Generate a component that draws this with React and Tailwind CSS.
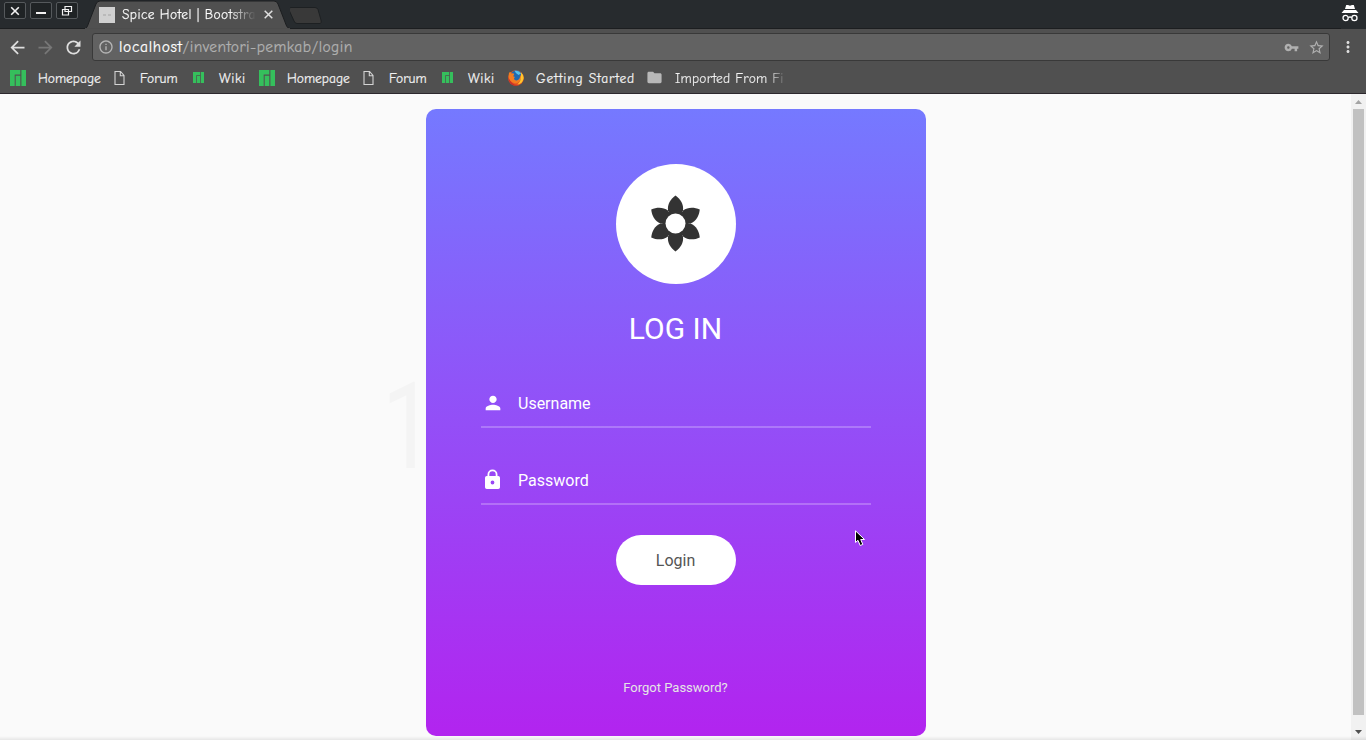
import React from "react";
import {
  MdArrowBack,
  MdArrowForward,
  MdRefresh,
  MdInfoOutline,
  MdVpnKey,
  MdStarBorder,
  MdMoreVert,
  MdPerson,
  MdFolder,
} from "react-icons/md";

function WindowButton({ children }) {
  return (
    <div className="flex h-[17px] w-[22px] items-center justify-center rounded-[2px] border border-[#55595c] bg-[#1f2325]">
      <svg width="12" height="12" viewBox="0 0 12 12" fill="none" stroke="#f2f2f2">
        {children}
      </svg>
    </div>
  );
}

function TitleBar() {
  return (
    <div className="flex h-[29px] shrink-0 bg-[#272b2e]">
      <div className="flex w-[85px] gap-1 border-b border-[#1c1e20] pt-[2px] pl-1">
        <WindowButton>
          <path d="M2.200 2.200l7.600 7.600M9.800 2.200l-7.600 7.600" strokeWidth="1.600" />
        </WindowButton>
        <WindowButton>
          <path d="M1 8h10" strokeWidth="2" />
        </WindowButton>
        <WindowButton>
          <path d="M4 1.500h6.500v5h-6.500zM1.500 4.500h6v5.500h-6z" strokeWidth="1.200" />
        </WindowButton>
      </div>
      <div className="relative flex w-[205px] items-center pl-[14px]">
        <svg className="absolute inset-0" width="205" height="29" viewBox="0 0 205 29">
          <path d="M0 29C2 28 3 25 4 22L11 4Q12 1 15 1H189Q192 1 193 4L200 22C201 25 202 28 205 29Z" fill="#505050" stroke="#1c1e20" />
          <path d="M0 28.600H205" stroke="#505050" />
        </svg>
        <svg className="relative shrink-0" width="16" height="16" viewBox="0 0 16 16">
          <rect width="16" height="16" fill="#d0d0d0" />
          <path d="M4 8h3M9 8h3" stroke="#a4a4a4" />
        </svg>
        <span className="relative ml-[7px] w-[134px] overflow-hidden bg-linear-to-r from-white from-80% to-transparent bg-clip-text text-[13.5px] leading-5 tracking-[0.4px] whitespace-nowrap text-transparent [-webkit-text-stroke:0.25px_transparent]">
          Spice Hotel | Bootstra
        </span>
        <svg className="relative ml-[8px] shrink-0" width="9" height="9" viewBox="0 0 9 9" stroke="#e0e0e0" strokeWidth="1.500">
          <path d="M.7.7l7.600 7.600M8.300.7L.7 8.300" />
        </svg>
      </div>
      <div className="flex-1 border-b border-[#1c1e20]">
        <svg width="34" height="28" viewBox="0 0 34 28">
          <path d="M1 7.500H25Q27 7.500 28 9.500L31 20Q32 23.500 30 23.500H7Q5 23.500 4 21L-1 10Q-2 7.500 1 7.500Z" fill="#393939" stroke="#1d2022" />
        </svg>
      </div>
      <svg className="mt-[5px] mr-[7px]" width="18" height="17" viewBox="0 0 18 17">
        <path d="M5.200 0H7L9 .7 11 0H12.800L14 4H4ZM3 5H15L17.500 8H.5Z" fill="#fff" />
        <g fill="none" stroke="#fff" strokeWidth="1.300">
          <circle cx="4.600" cy="13" r="2.600" />
          <circle cx="13.400" cy="13" r="2.600" />
          <path d="M7.300 12.500q1.700-1 3.400 0" />
        </g>
      </svg>
    </div>
  );
}

function AddressBar() {
  return (
    <div className="flex h-8 shrink-0 items-center bg-[#505050] pt-1">
      <MdArrowBack className="ml-[7px]" size={21} color="#dedede" />
      <MdArrowForward className="ml-[7px]" size={21} color="#777" />
      <MdRefresh className="ml-[7px]" size={21} color="#dedede" />
      <div className="ml-[8px] flex h-7 w-[1238px] items-center rounded-[3px] border border-[#393939] bg-[#626262] pl-[5px]">
        <MdInfoOutline size={16} color="#b5b5b5" />
        <span className="ml-[5px] flex-1 text-[15.5px] leading-5 tracking-[0.42px] text-[#b0b0b0] [-webkit-text-stroke:0.2px]">
          <span className="tracking-[0.65px] text-white">localhost</span>/inventori-pemkab/login
        </span>
        <MdVpnKey size={15} color="#b0b0b0" />
        <MdStarBorder className="mr-[4px] ml-[9px]" size={17} color="#b0b0b0" />
      </div>
      <MdMoreVert className="ml-[9px]" size={18} color="#dedede" />
    </div>
  );
}

function ManjaroIcon({ size }) {
  return (
    <svg width={size} height={size} viewBox="0 0 16 16" fill="#35bf5c">
      <path d="M0 0H10.300V4.600H4.700V16H0ZM5.700 5.700H10.300V16H5.700ZM11.400 0H16V16H11.400Z" />
    </svg>
  );
}

function PageIcon() {
  return (
    <svg width="12" height="14" viewBox="0 0 12 14" fill="none" stroke="#d4d4d4" strokeWidth="1.100">
      <path d="M1 .5H6.500L10 4.500V13.500H1ZM6.300.5V4.800H10" />
    </svg>
  );
}

function FirefoxIcon() {
  return (
    <svg width="16" height="16" viewBox="0 0 16 16">
      <circle cx="8" cy="8" r="7.800" fill="#e8571f" />
      <circle cx="8.300" cy="6" r="5.800" fill="#2069b0" />
      <path d="M6.500.8Q11 0 13 3.500L10.500 5Q7.500 3.500 6.500.8" fill="#56c1ea" />
      <path d="M.9 3.200L2 1.800 3.600 3.400Q5.200 3 6.300 4L5.200 6.300 7 7Q5.200 8 6.500 9.800 9 11.500 11.200 9 12.600 7 11.800 4.500 13.500 6 13 9 11 14 6 13 1 11 .5 7Z" fill="#f47c20" />
      <path d="M12.800 2.300Q15.500 4.500 15.700 8 15 13.500 9.500 14.500 14 11 12.800 2.300" fill="#ffc62c" />
      <path d="M.4 6.500Q1.500 12 6.500 14.500 11 15.600 12.500 14 10 16 7 15.700 0 14.500.4 6.500" fill="#c9302a" />
    </svg>
  );
}

function Bookmark({ icon, label, width, gap }) {
  return (
    <div className={"flex shrink-0 items-center " + width}>
      <div className={"flex shrink-0 " + gap}>{icon}</div>
      <span className="pt-[3px] whitespace-nowrap">{label}</span>
    </div>
  );
}

function BookmarksBar() {
  return (
    <div className="flex h-[33px] shrink-0 items-center border-b border-[#2c282d] bg-[#505050] pt-px pl-[10px] text-[13.5px] text-[#f2f2f2] [-webkit-text-stroke:0.2px]">
      <Bookmark icon={<ManjaroIcon size={16} />} label="Homepage" width="w-[104px]" gap="w-[28px]" />
      <Bookmark icon={<PageIcon />} label="Forum" width="w-[79px]" gap="w-[26px]" />
      <Bookmark icon={<ManjaroIcon size={11} />} label={<span className="tracking-[0.6px]">Wiki</span>} width="w-[66px]" gap="w-[26px]" />
      <Bookmark icon={<ManjaroIcon size={16} />} label="Homepage" width="w-[104px]" gap="w-[28px]" />
      <Bookmark icon={<PageIcon />} label="Forum" width="w-[79px]" gap="w-[26px]" />
      <Bookmark icon={<ManjaroIcon size={11} />} label={<span className="tracking-[0.6px]">Wiki</span>} width="w-[66px]" gap="w-[26px]" />
      <Bookmark icon={<FirefoxIcon />} label={<span className="tracking-[0.8px]">Getting Started</span>} width="w-[138px]" gap="w-[28px]" />
      <Bookmark
        icon={<MdFolder size={17} color="#b8b8b8" />}
        label={
          <span className="block w-[112px] overflow-hidden bg-linear-to-r from-[#f2f2f2] from-82% to-transparent bg-clip-text tracking-[0.25px] text-transparent [-webkit-text-stroke:0.2px_transparent]">
            Imported From Fi
          </span>
        }
        width="w-[144px]"
        gap="w-[29px]"
      />
    </div>
  );
}

const petals = [0, 60, 120, 180, 240, 300];

function LockIcon() {
  return (
    <svg width="22" height="22" viewBox="0 0 22 22">
      <path
        fill="#fff"
        fillRule="evenodd"
        d="M5.500 7V5.500a5 5 0 0 1 10 0V7H16.200a1.800 1.800 0 0 1 1.800 1.800V18.200a1.800 1.800 0 0 1-1.800 1.800H4.800A1.800 1.800 0 0 1 3 18.200V8.800A1.800 1.800 0 0 1 4.800 7ZM7.300 7H13.700V5.500a3.200 3.200 0 0 0-6.400 0ZM10.500 11.600a1.900 1.900 0 1 0 0 3.800a1.900 1.900 0 1 0 0-3.800Z"
      />
    </svg>
  );
}

function Field({ icon, label }) {
  return (
    <div className="mb-[30px] flex h-[47px] items-center border-b-2 border-white/24 pl-px">
      <span className="w-[36.500px] pb-[2px]">{icon}</span>
      <span className="text-[16px] leading-5 text-white">{label}</span>
    </div>
  );
}

function LoginCard() {
  return (
    <div className="relative flex h-[627px] w-[500px] flex-col rounded-[10px] bg-linear-to-b/srgb from-[#7579ff] to-[#b224ef] px-[55px] pt-[55px] font-['Roboto',sans-serif]">
      <div className="flex size-[120px] shrink-0 items-center justify-center self-center rounded-full bg-white">
        <svg width="60" height="60" viewBox="-29.500 -29.500 60 60">
          {petals.map((a) => (
            <path
              key={a}
              transform={"rotate(" + a + ")"}
              d="M0-28C5-24.500 8.300-19 7.500-13L0 0L-7.500-13C-8.300-19-5-24.500 0-28Z"
              fill="#333"
            />
          ))}
          <circle r="13" fill="#333" />
          <circle r="10" fill="#fff" />
        </svg>
      </div>
      <h1 className="mt-[27px] mb-[34px] text-center text-[30px] leading-9 text-white">LOG IN</h1>
      <Field icon={<MdPerson size={22} color="#fff" />} label="Username" />
      <Field icon={<LockIcon />} label="Password" />
      <button className="h-[50px] w-[120px] shrink-0 self-center rounded-[25px] bg-white pt-[2px] text-[16px] text-[#555]">
        Login
      </button>
      <a className="mt-[93px] text-center text-[13px] leading-5 text-[#e5e5e5]">Forgot Password?</a>
    </div>
  );
}

function Scrollbar() {
  return (
    <div className="flex w-[15px] shrink-0 flex-col items-center bg-[#f1f1f1]">
      <svg width="15" height="15" viewBox="0 0 15 15">
        <path d="M4 10L7.500 6L11 10Z" fill="#a3a3a3" />
      </svg>
      <div className="h-[606px] w-[11px] bg-[#c1c1c1]" />
      <svg className="mt-[9px]" width="15" height="15" viewBox="0 0 15 15">
        <path d="M4 6L7.500 10L11 6Z" fill="#505050" />
      </svg>
    </div>
  );
}

export default function App() {
  return (
    <div className="flex h-[740px] w-[1366px] flex-col overflow-hidden bg-[#fafafa] font-['Comic_Neue','Noto_Sans',sans-serif]">
      <TitleBar />
      <AddressBar />
      <BookmarksBar />
      <main className="relative flex h-[646px]">
        <span className="absolute top-[273px] left-[382px] origin-left scale-x-76 font-['Roboto',sans-serif] text-[121px] leading-[121px] text-[#f4f4f4]">
          1
        </span>
        <div className="flex flex-1 justify-center pt-[15px]">
          <LoginCard />
        </div>
        <Scrollbar />
        <div className="absolute bottom-0 left-0 h-1 w-full bg-linear-to-b from-transparent to-black/8" />
        <svg className="absolute top-[436px] left-[855px]" width="11" height="17" viewBox="0 0 11 17">
          <path d="M.5.8V12.500L3 10.300 5.200 15.500 7.800 14.400 5.700 9.500H9.500Z" fill="#000" stroke="#fff" />
        </svg>
      </main>
    </div>
  );
}
